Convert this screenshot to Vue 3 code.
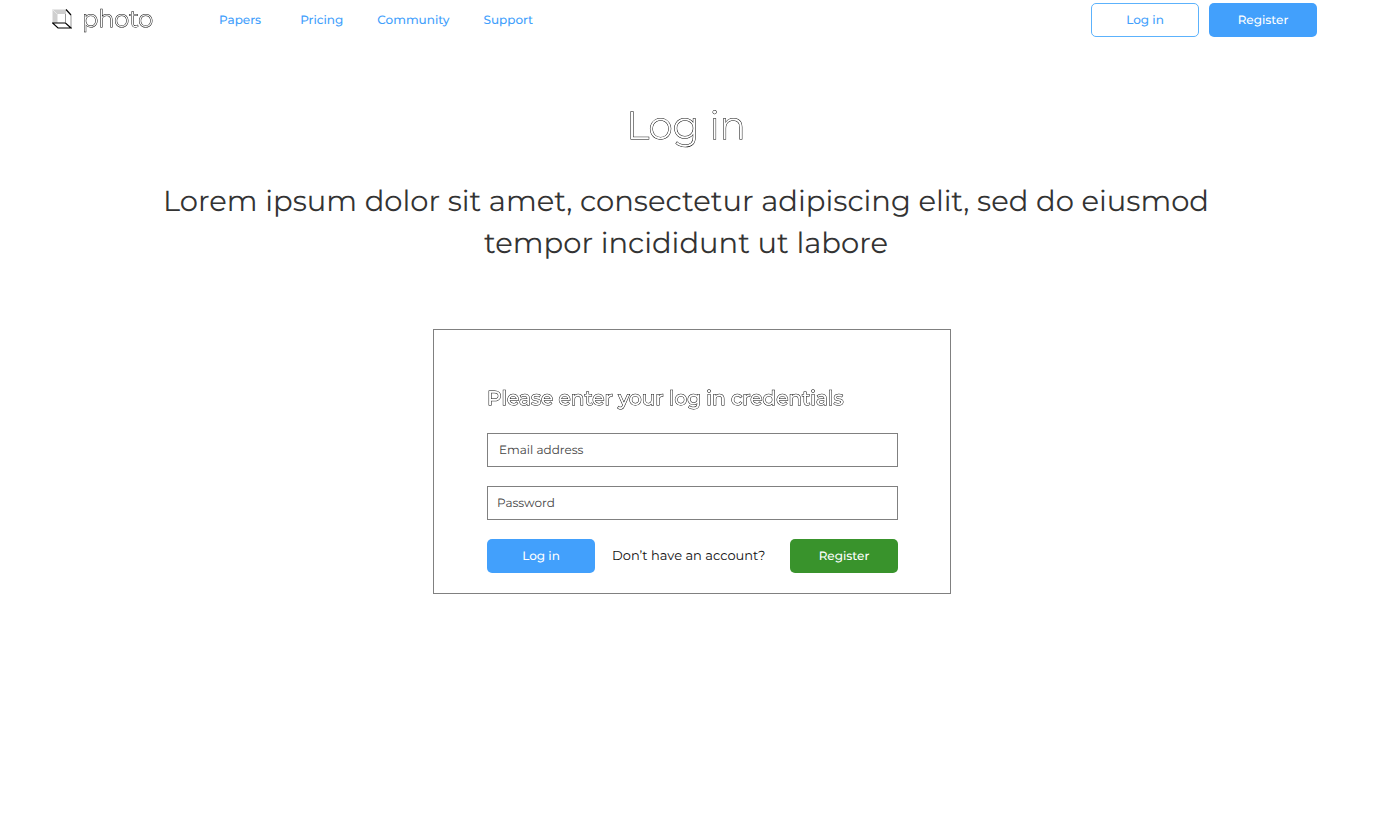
<script setup>
import { ref } from 'vue'

const links = [
  { label: 'Papers', wide: true },
  { label: 'Pricing' },
  { label: 'Community' },
  { label: 'Support' },
]
const email = ref('')
const password = ref('')
</script>

<template>
  <div class="page">
    <header class="top">
      <a class="brand" href="#">
        <svg class="mark" viewBox="0 0 20 20" width="20" height="20" aria-hidden="true">
          <path d="M0.500 0.500H14V5H5.500V14H0.500Z" fill="#cfcfcf" />
          <path d="M0.500 0.500L5.500 5.500" stroke="#e6e6e6" />
          <path d="M19 6V19M13.500 5V13.500" fill="none" stroke="#999" />
          <path d="M14 0.500L19 6M0.500 14H13.500L19 19H6Z" fill="none" stroke="#000" stroke-width="1.200" />
        </svg>
        <span class="brand-name">photo</span>
      </a>
      <nav class="nav">
        <a v-for="link in links" :key="link.label" href="#" :class="{ wide: link.wide }">{{ link.label }}</a>
      </nav>
      <div class="actions">
        <button type="button" class="btn outline">Log in</button>
        <button type="button" class="btn blue">Register</button>
      </div>
    </header>

    <main>
      <section class="hero">
        <h1>Log in</h1>
        <p>Lorem ipsum dolor sit amet, consectetur adipiscing elit, sed do eiusmod tempor incididunt ut labore</p>
      </section>

      <form class="card" @submit.prevent>
        <h2>Please enter your log in credentials</h2>
        <input v-model="email" type="email" placeholder="Email address" aria-label="Email address" />
        <input v-model="password" class="pass" type="password" placeholder="Password" aria-label="Password" />
        <div class="row">
          <button type="submit" class="btn blue">Log in</button>
          <span class="ask">Don’t have an account?</span>
          <button type="button" class="btn green">Register</button>
        </div>
      </form>
    </main>
  </div>
</template>

<style>
body {
  margin: 0;
  background: #fff;
}
</style>

<style scoped>
.page,
.page input,
.page button {
  font-family: Montserrat, Inter, "Open Sans", sans-serif;
  text-rendering: geometricPrecision;
}
.page * {
  box-sizing: border-box;
}
.brand-name,
h1,
h2 {
  color: #fff;
  -webkit-text-stroke: 1px #000;
  paint-order: stroke fill;
  will-change: transform;
}
.top {
  display: flex;
  align-items: center;
  padding: 3px 77px 0 52px;
}
.brand {
  display: flex;
  align-items: center;
  gap: 10px;
  width: 167px;
  text-decoration: none;
}
.mark {
  margin-bottom: 3px;
}
.brand-name {
  font-size: 24px;
  line-height: 34px;
  font-weight: 300;
}
.nav {
  display: flex;
  gap: 34px;
}
.nav a {
  font-size: 12px;
  line-height: 21px;
  font-weight: 500;
  color: #42a0fc;
  text-decoration: none;
}
.nav .wide {
  margin-right: 5px;
}
.actions {
  display: flex;
  gap: 10px;
  margin-left: auto;
}
.btn {
  width: 108px;
  height: 34px;
  padding: 0;
  border: 0;
  border-radius: 5px;
  font-size: 12px;
  font-weight: 500;
  color: #fff;
}
.btn.outline {
  border: 1px solid #5cb2fc;
  background: #fff;
  color: #42a0fc;
}
.btn.blue {
  background: #42a0fc;
}
.btn.green {
  background: #39932c;
}
main {
  padding: 62px 10px 0 0;
}
.hero {
  padding: 0 12px 0 0;
  text-align: center;
}
h1 {
  margin: 0;
  font-size: 39px;
  line-height: 52px;
  font-weight: 300;
}
.hero p {
  max-width: 1100px;
  margin: 30px auto 0;
  font-size: 29px;
  line-height: 42px;
  color: #333;
}
.card {
  width: 518px;
  margin: 64px auto 0;
  padding: 55px 52px 20px 53px;
  border: 1px solid #808080;
}
h2 {
  margin: 0 0 20px;
  font-size: 20px;
  line-height: 28px;
  font-weight: 500;
}
.card input {
  display: block;
  width: 100%;
  height: 34px;
  margin: 0 0 19px;
  padding: 0 11px;
  border: 1px solid #808080;
  border-radius: 0;
  background: #fff;
  font-size: 12px;
  color: #444;
}
.card .pass {
  padding: 0 9px;
}
.card input::placeholder {
  color: #444;
  opacity: 1;
}
.row {
  display: flex;
  align-items: center;
}
.ask {
  margin-left: 17px;
  font-size: 13px;
  line-height: 20px;
  color: #111;
}
.row .green {
  margin-left: auto;
}
</style>
